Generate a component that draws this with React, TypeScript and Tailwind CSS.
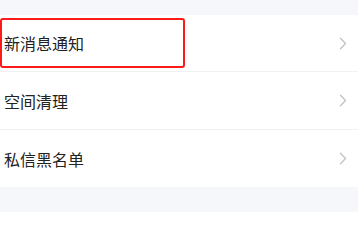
import React from "react";

const items = [
  { label: "新消息通知", h: "h-[56px]" },
  { label: "空间清理", h: "h-[57px]" },
  { label: "私信黑名单", h: "h-[57px]" },
];

function Chevron() {
  return (
    <svg width="8" height="13" viewBox="0 0 8 13" fill="none" className="shrink-0">
      <path d="M1.5 1.2 L6.5 6.5 L1.5 11.8" stroke="#c4c4c4" strokeWidth="1.4" strokeLinecap="round" strokeLinejoin="round" />
    </svg>
  );
}

export default function App() {
  return (
    <div
      className="w-[358px] h-[212px] bg-[#f5f7fa] pt-[15px] overflow-hidden"
      style={{ fontFamily: '"Noto Sans CJK SC", "Noto Sans", sans-serif' }}
    >
      <div className="bg-white">
        {items.map((item, i) => (
          <div key={item.label}>
            {i > 0 && <div className="h-px bg-[#f0f1f3]" />}
            <div className={`relative flex ${item.h} items-center justify-between pl-[4px] pr-[11px]`}>
              <span className="text-[16px] leading-none text-[#222222]">{item.label}</span>
              <Chevron />
              {i === 0 && (
                <div className="absolute left-0 top-[3px] h-[50px] w-[185px] rounded-[3px] border-2 border-[#ff1a1a]" />
              )}
            </div>
          </div>
        ))}
      </div>
    </div>
  );
}
